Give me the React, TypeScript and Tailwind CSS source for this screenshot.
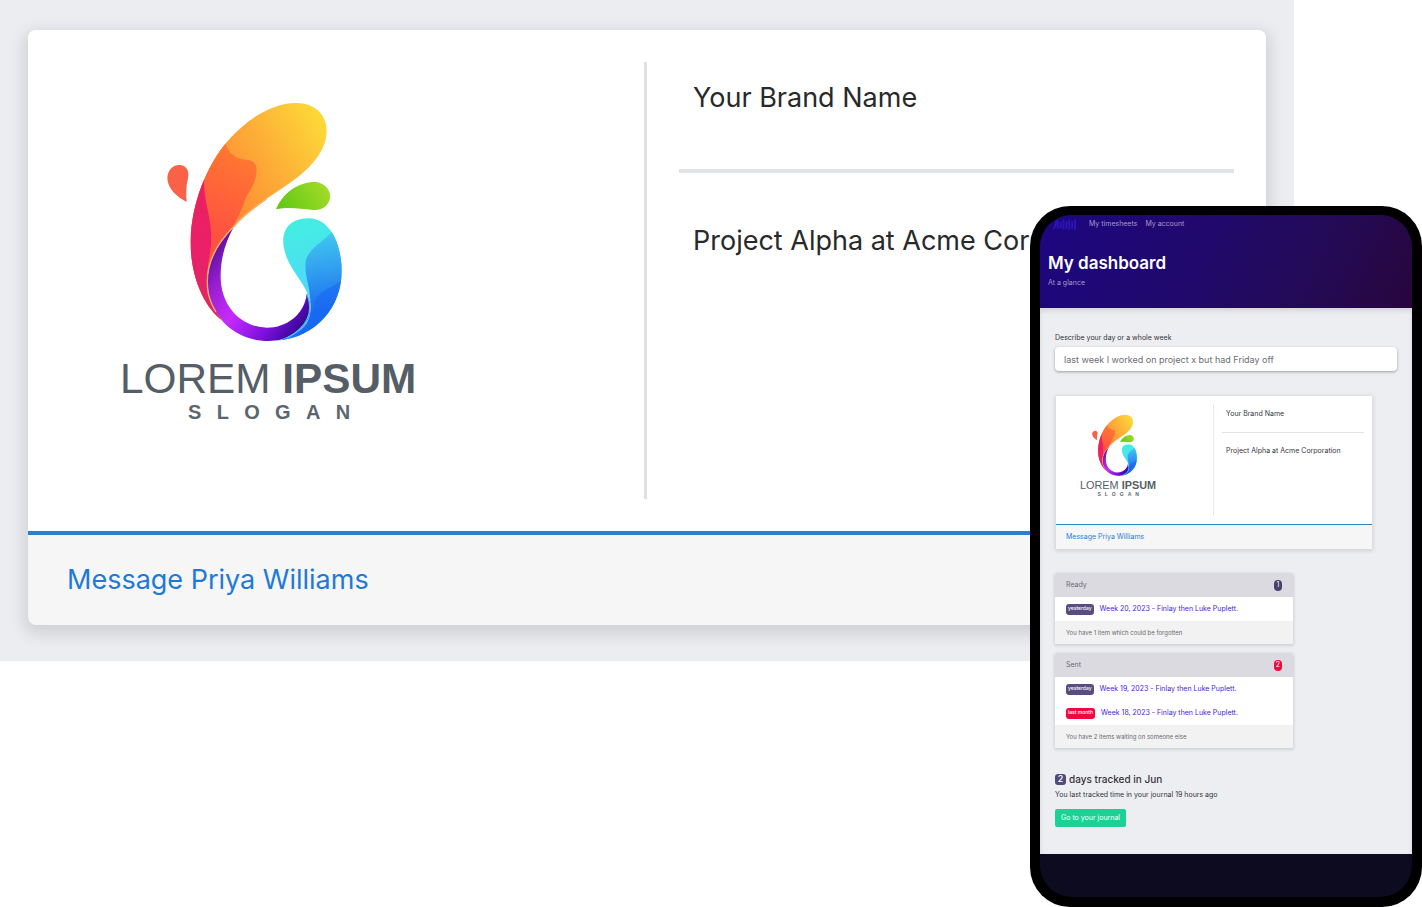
import { useId } from "react";

const lists = [
  {
    title: "Ready",
    count: 1,
    countClass: "bg-[#47416b]",
    note: "You have 1 item which could be forgotten",
    items: [
      {
        tag: "yesterday",
        tagClass: "bg-[#5a4b81]",
        label: "Week 20, 2023 - Finlay then Luke Puplett.",
      },
    ],
  },
  {
    title: "Sent",
    count: 2,
    countClass: "bg-[#f5053d]",
    note: "You have 2 items waiting on someone else",
    items: [
      {
        tag: "yesterday",
        tagClass: "bg-[#5a4b81]",
        label: "Week 19, 2023 - Finlay then Luke Puplett.",
      },
      {
        tag: "last month",
        tagClass: "bg-[#f5053d]",
        label: "Week 18, 2023 - Finlay then Luke Puplett.",
      },
    ],
  },
];

function BrandLogo({ className }: { className: string }) {
  const id = useId();
  const ref = (name: string) => `url(#${id}${name})`;

  return (
    <svg viewBox="60 60 900 970" className={className} role="img" aria-label="Lorem Ipsum">
      <defs>
        <linearGradient id={`${id}yellow`} x1="380" y1="320" x2="690" y2="140" gradientUnits="userSpaceOnUse">
          <stop offset="0" stopColor="#fd8f35" />
          <stop offset="0.5" stopColor="#fdb338" />
          <stop offset="1" stopColor="#fddb38" />
        </linearGradient>
        <linearGradient id={`${id}orange`} x1="330" y1="440" x2="450" y2="220" gradientUnits="userSpaceOnUse">
          <stop offset="0" stopColor="#ff5340" />
          <stop offset="1" stopColor="#ff7a30" />
        </linearGradient>
        <linearGradient id={`${id}red`} x1="290" y1="300" x2="320" y2="720" gradientUnits="userSpaceOnUse">
          <stop offset="0" stopColor="#e8215f" />
          <stop offset="0.5" stopColor="#ec1f68" />
          <stop offset="1" stopColor="#d92a66" />
        </linearGradient>
        <linearGradient id={`${id}purple`} x1="340" y1="500" x2="640" y2="720" gradientUnits="userSpaceOnUse">
          <stop offset="0" stopColor="#5d0f9f" />
          <stop offset="0.2" stopColor="#9a1fd0" />
          <stop offset="0.45" stopColor="#c72bff" />
          <stop offset="0.75" stopColor="#7a10dc" />
          <stop offset="1" stopColor="#2c0484" />
        </linearGradient>
        <linearGradient id={`${id}aqua`} x1="560" y1="430" x2="640" y2="640" gradientUnits="userSpaceOnUse">
          <stop offset="0" stopColor="#43efe0" />
          <stop offset="1" stopColor="#4fd8fb" />
        </linearGradient>
        <linearGradient id={`${id}blue`} x1="650" y1="450" x2="690" y2="690" gradientUnits="userSpaceOnUse">
          <stop offset="0" stopColor="#44cdf0" />
          <stop offset="0.55" stopColor="#2f9aef" />
          <stop offset="1" stopColor="#1a6cf2" />
        </linearGradient>
        <linearGradient id={`${id}green`} x1="550" y1="390" x2="680" y2="310" gradientUnits="userSpaceOnUse">
          <stop offset="0" stopColor="#63c916" />
          <stop offset="1" stopColor="#a3dc28" />
        </linearGradient>
        <clipPath id={`${id}body`}>
          <path d="M585 69C645 68 681 104 680 155C678 212 637 257 585 298C522 346 455 376 400 441C338 503 313 572 325 640C332 672 347 698 370 724C308 680 270 582 272 480C275 370 320 255 385 181C447 111 521 70 585 69Z" />
        </clipPath>
        <clipPath id={`${id}drop`}>
          <path d="M628 415C690 417 724 490 725 570C726 680 650 772 530 782C596 765 628 728 631 688C635 640 601 606 576 564C551 522 543 482 555 453C567 426 598 414 628 415Z" />
        </clipPath>
      </defs>

      <path
        fill={ref("purple")}
        d="M402 440C342 500 312 568 325 640C343 725 417 784 505 783C560 782 606 765 626 720C637 694 628 662 620 641C614 703 560 743 500 743C415 740 361 670 362 588C362 530 378 482 402 440Z"
      />
      <g clipPath={ref("body")}>
        <path fill={ref("yellow")} d="M250 50H700V740H250Z" />
        <path
          fill={ref("orange")}
          d="M378 195C392 232 420 238 445 240C468 243 475 262 466 296C458 326 443 338 434 362C424 395 412 415 394 452L320 580L240 720V200L370 150Z"
        />
        <path
          fill={ref("red")}
          d="M315 270C304 340 328 390 332 445C340 505 318 555 321 610C323 655 350 700 372 730H240V280Z"
        />
      </g>
      <path
        fill="none"
        stroke="#f9b26b"
        strokeWidth="4"
        d="M500 357C462 383 430 406 400 441C338 503 313 572 325 640C330 662 338 680 348 696"
      />
      <g clipPath={ref("drop")}>
        <path fill={ref("aqua")} d="M500 400H740V800H500Z" />
        <path
          fill={ref("blue")}
          d="M700 450C680 482 626 498 617 545C612 590 634 620 632 690C628 740 600 760 520 790H740V440Z"
        />
        <path fill="#1a66f0" fillOpacity="0.55" d="M740 580C715 622 672 622 648 655C640 700 625 745 560 800H740Z" />
      </g>
      <path fill="none" stroke="#53b8f5" strokeWidth="4" d="M621 642C640 690 628 738 560 775" />
      <path
        fill={ref("green")}
        d="M528 388C547 342 590 307 645 305C678 309 694 334 690 355C685 380 665 392 640 390C600 385 562 380 528 388Z"
      />
      <path
        fill="#fa6248"
        d="M240 255C262 258 268 275 264 295C258 320 258 340 260 366C229 351 203 325 202 295C203 268 220 254 240 255Z"
      />
      <text x="60" y="940" fontSize="127" fill="#555e66" fontFamily="Liberation Sans, sans-serif">
        LOREM <tspan fontWeight="700">IPSUM</tspan>
      </text>
      <text
        x="264"
        y="1017"
        fontSize="60"
        fontWeight="700"
        letterSpacing="46"
        fill="#5d666e"
        fontFamily="Liberation Sans, sans-serif"
      >
        SLOGAN
      </text>
    </svg>
  );
}

function BrandCard() {
  return (
    <article className="overflow-hidden rounded-lg bg-[#f6f6f6] shadow-[0_5px_16px_4px_rgba(0,0,0,0.12)]">
      <div className="grid h-[501px] grid-cols-2 bg-white py-8">
        <div className="border-r-3 border-[#dfe0e1] pt-[38px] pl-[92px]">
          <BrandLogo className="w-[300px]" />
        </div>
        <div className="px-8 text-[27px] leading-9 text-[#28292b]">
          <p className="border-b-4 border-[#e1e3e4] px-[14px] pt-[18px] pb-[53px]">Your Brand Name</p>
          <p className="px-[14px] pt-[50px] whitespace-nowrap">Project Alpha at Acme Corporation</p>
        </div>
      </div>
      <footer className="border-t-4 border-[#2b7fd2] px-[39px] py-[27px] text-[27px] leading-9">
        <a href="#message" className="text-[#1e7ad6]">
          Message Priya Williams
        </a>
      </footer>
    </article>
  );
}

function SmallBrandCard() {
  return (
    <article className="mr-[25px] ml-px bg-[#f6f6f6] shadow-[0_1px_4px_1px_rgba(0,0,0,0.12)]">
      <div className="grid h-32 grid-cols-2 bg-white py-2">
        <div className="border-r border-[#e8e9eb] pt-[10px] pl-6">
          <BrandLogo className="w-[77px]" />
        </div>
        <div className="px-2 text-[7px] leading-3 text-[#35363a]">
          <p className="border-b border-[#e1e3e4] px-1 pt-1 pb-3">Your Brand Name</p>
          <p className="px-1 pt-3">Project Alpha at Acme Corporation</p>
        </div>
      </div>
      <footer className="border-t border-[#2b84c8] px-[10px] py-[6px] text-[7px] leading-3">
        <a href="#message" className="text-[#2a80d2]">
          Message Priya Williams
        </a>
      </footer>
    </article>
  );
}

function Phone() {
  return (
    <div className="absolute top-[206px] right-0 w-[392px] rounded-[40px] bg-black p-[10px] pt-[9px]">
      <div className="overflow-hidden rounded-[32px] bg-[#0d0b20]">
        <header className="h-[93px] bg-[linear-gradient(115deg,#1d0680_0%,#20096a_45%,#240a54_75%,#28053c_100%)] px-2">
          <nav className="flex h-[18px] items-center gap-2 text-[7px] text-[#a59acb]">
            <svg viewBox="0 0 30 12" className="mr-1 h-3 w-[29px]" aria-hidden="true">
              <path
                d="M6 11L9 3M10 2V11M13 4V11M16 1V12M19 3V11M22 1V12M25 3V11M28 1V12"
                stroke="#2c15b4"
                strokeWidth="2"
              />
            </svg>
            <a href="#timesheets">My timesheets</a>
            <a href="#account">My account</a>
          </nav>
          <h1 className="mt-[18px] text-[17px] leading-6 font-semibold text-white">My dashboard</h1>
          <p className="mt-[2px] text-[7px] leading-3 text-[#a59acb]">At a glance</p>
        </header>

        <main className="h-[546px] bg-[#edeef2] px-[15px] pt-6 text-[#333438] shadow-[inset_0_3px_4px_rgba(40,30,60,0.12)]">
          <label htmlFor="day" className="block text-[7px] leading-3">
            Describe your day or a whole week
          </label>
          <input
            id="day"
            type="text"
            defaultValue="last week I worked on project x but had Friday off"
            className="mt-[3px] h-6 w-full rounded-sm bg-white px-[9px] text-[9px] text-[#6b6d72] shadow-[0_1px_3px_rgba(0,0,0,0.35)] outline-none"
          />

          <div className="mt-[25px]">
            <SmallBrandCard />
          </div>

          <div className="mt-6 flex w-[238px] flex-col gap-[9px]">
            {lists.map((list) => (
              <section
                key={list.title}
                className="overflow-hidden rounded-xs bg-white text-[7px] shadow-[0_1px_3px_1px_rgba(0,0,0,0.12)]"
              >
                <div className="flex h-6 items-center justify-between bg-[#dbdae1] px-[11px] text-[#696a72]">
                  <h2>{list.title}</h2>
                  <span
                    className={`flex h-[11px] w-2 items-center justify-center rounded-[4px] text-white ${list.countClass}`}
                  >
                    {list.count}
                  </span>
                </div>
                <ul>
                  {list.items.map((item) => (
                    <li key={item.label} className="flex h-6 items-center gap-[6px] px-[11px]">
                      <span
                        className={`flex h-[11px] items-center rounded-[3px] px-[2px] text-[5px] font-medium text-white ${item.tagClass}`}
                      >
                        {item.tag}
                      </span>
                      <a href="#week" className="text-[#4526d2]">
                        {item.label}
                      </a>
                    </li>
                  ))}
                </ul>
                <p className="flex h-[23px] items-center bg-[#f2f2f3] px-[11px] text-[6px] text-[#696a70]">
                  {list.note}
                </p>
              </section>
            ))}
          </div>

          <h2 className="mt-6 flex items-center gap-[3px] text-[10px] leading-[14px] font-medium">
            <span className="flex size-[11px] items-center justify-center rounded-[3px] bg-[#524a7b] text-[9px] text-white">
              2
            </span>
            days tracked in Jun
          </h2>
          <p className="mt-[3px] text-[7px] leading-3">You last tracked time in your journal 19 hours ago</p>
          <button
            type="button"
            className="mt-2 h-[18px] rounded-xs bg-[#1bd295] px-[6px] text-[7px] text-white"
          >
            Go to your journal
          </button>
        </main>
        <div className="h-[43px]" />
      </div>
    </div>
  );
}

export default function App() {
  return (
    <div className="relative min-h-screen overflow-hidden bg-white font-[Inter,sans-serif]">
      <div className="w-[91%] bg-[#ecedf1] px-7 pt-[30px] pb-9">
        <BrandCard />
      </div>
      <Phone />
    </div>
  );
}
